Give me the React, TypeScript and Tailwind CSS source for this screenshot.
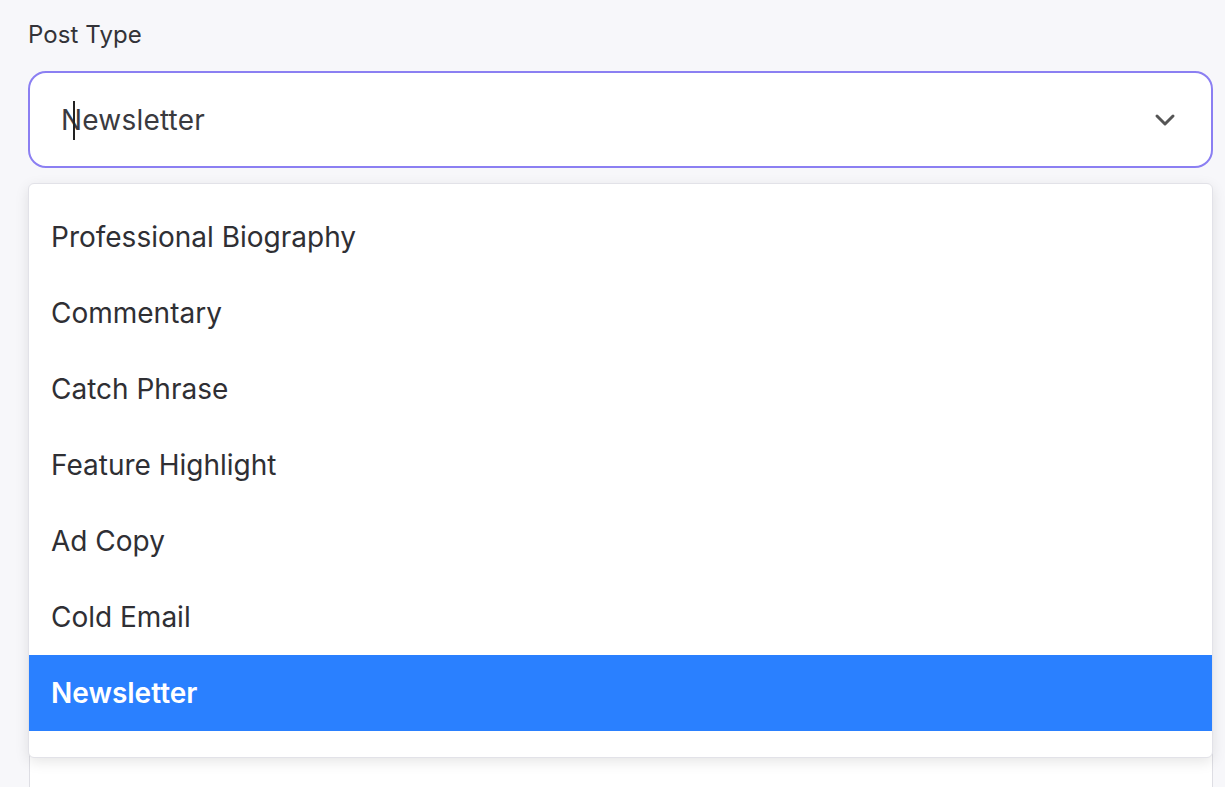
import React from 'react';

const options = [
  'Professional Biography',
  'Commentary',
  'Catch Phrase',
  'Feature Highlight',
  'Ad Copy',
  'Cold Email',
  'Newsletter',
];

export default function App() {
  const selected = 'Newsletter';

  return (
    <div className="min-h-screen w-full bg-[#f7f7fa] font-['Inter',sans-serif] overflow-hidden">
      <div className="pl-[28px] pr-[12px] pt-[21px]">
        <label className="block text-[24px] leading-[28px] tracking-[0.1px] text-[#333338]">Post Type</label>

        <div className="relative mt-[22px]">
          {/* select trigger */}
          <div className="relative h-[97px] rounded-[18px] border-[2px] border-[#8b7ff2] bg-white flex items-center pl-[31px] pr-[35px]">
            <span className="text-[28px] text-[#3a3a3f] tracking-[0.2px]">{selected}</span>
            <span className="absolute left-[43px] top-[28px] w-[2px] h-[39px] bg-[#222]" />
            <svg className="ml-auto" width="22" height="14" viewBox="0 0 22 14" fill="none">
              <path d="M3 3l8 8 8-8" stroke="#555" strokeWidth="3" strokeLinecap="round" strokeLinejoin="round" />
            </svg>
          </div>

          {/* next field under the menu */}
          <div className="mt-[572px] ml-[1px] h-[80px] rounded-[6px] border border-[#dedee4] bg-white" />

          {/* open menu */}
          <div className="absolute left-0 right-0 top-[112px] z-10 rounded-[6px] border border-[#e2e2e8] bg-white shadow-[0_4px_14px_rgba(0,0,0,0.10)] pt-[15px] pb-[26px] overflow-hidden">
            {options.map((opt) => (
              <div
                key={opt}
                className={
                  opt === selected
                    ? 'h-[76px] flex items-center pl-[22px] bg-[#2a80ff] text-white text-[28px] font-semibold'
                    : 'h-[76px] flex items-center pl-[22px] text-[#2f2f34] text-[28px]'
                }
              >
                {opt}
              </div>
            ))}
          </div>
        </div>
      </div>
    </div>
  );
}
